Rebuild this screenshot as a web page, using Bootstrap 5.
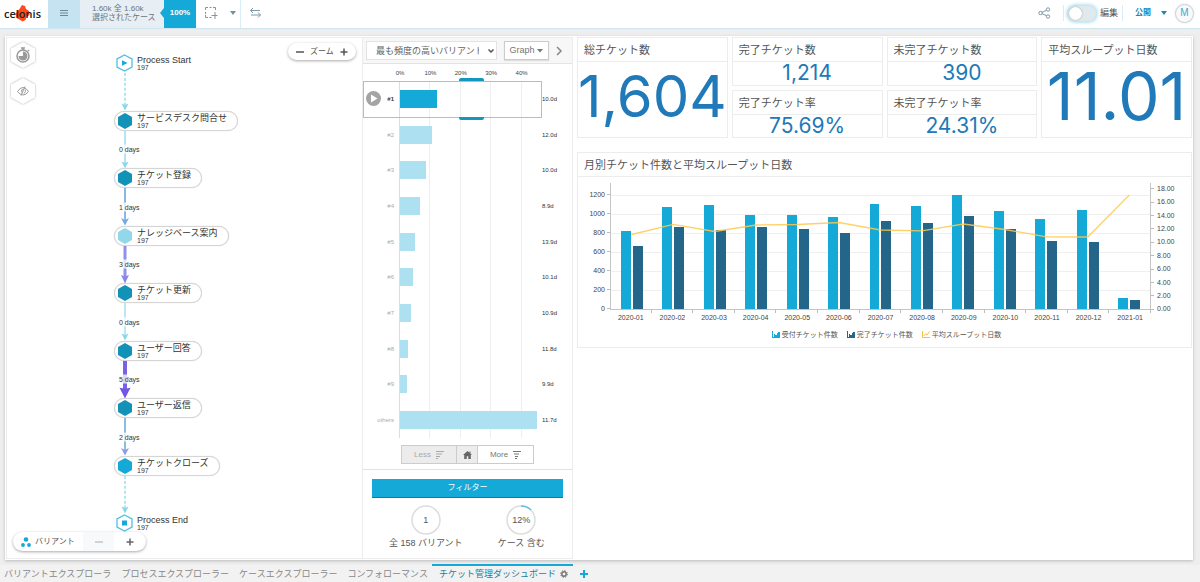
<!DOCTYPE html>
<html lang="ja">
<head>
<meta charset="utf-8">
<meta name="viewport" content="width=device-width, initial-scale=1">
<title>チケット管理ダッシュボード</title>
<link href="https://cdn.jsdelivr.net/npm/bootstrap@5.3.0/dist/css/bootstrap.min.css" rel="stylesheet">
<style>
:root { --cy: #14a9d6; --pale: #ade0f1; --navy: #24668a; --num: #2079b8; --line: #ececec; }
body { font-family: "Liberation Sans", "Noto Sans CJK JP", sans-serif; font-size: 9px; line-height: 12px; color: #555; background: #eee; }
a { color: inherit; text-decoration: none; }
button, select { font-family: inherit; color: inherit; }
svg { display: block; flex: none; }
.topbar { height: 29px; background: #fff; border-bottom: 1px solid #cfe6f0; }
.logo { width: 48px; }
.menu-btn { width: 32px; background: #c5e4f1; border: 0; padding: 0 0 2px; }
.picked { width: 84px; padding: 0 0 2px 12px; background: #e7eff4; color: #6a7680; font-size: 8px; line-height: 9px; }
.pct { width: 32px; background: var(--cy); color: #fff; font-size: 8px; font-weight: 700; position: relative; padding-bottom: 2px; }
.pct::before { content: ""; position: absolute; left: -4px; top: 8px; border: 5px solid transparent; border-left: 0; border-right: 4px solid var(--cy); }
.plain { border: 0; background: none; padding: 0; }
.tool { padding: 0 0 2px; }
.vline { width: 1px; background: #d8edf5; }
.vline-s { height: 16px; }
.right-tools { padding: 0 6px 2px 0; }
.edit-switch { appearance: none; width: 28px; height: 15px; border-radius: 8px; background: #e2e9ed; margin: 0; box-shadow: 0 0 3px 2px #b9e3f3; position: relative; }
.edit-switch::before { content: ""; position: absolute; left: 1px; top: 1px; width: 13px; height: 13px; border-radius: 50%; background: #fff; box-shadow: 0 0 2px #999; }
.publish { font-size: 8px; font-weight: 700; color: #1a86bd; gap: 10px; }
.avatar { width: 19px; height: 19px; border-radius: 50%; border: 1px solid #ccd5da; background: #f7f9fa; color: #41a9d3; font-size: 10px; padding: 0; box-shadow: 0 0 2px #ddd; }
.board { margin: 7px 7px 5px 5px; padding: 1px; background: #fff; box-shadow: 0 1px 3px #bbb; display: grid; grid-template-columns: minmax(0, 357fr) 210px minmax(0, 619fr); }
.pane-process { position: relative; border: 1px solid var(--line); padding: 15px 0 25px 107px; }
.pane-variant { border: 1px solid var(--line); border-left: 0; }
.pane-dash { padding: 0 0 0 4px; }
.hexbtn { filter: drop-shadow(0 0 1px #aaa); }
.over-left { position: absolute; left: 3px; top: 3px; }
.over-zoom { position: absolute; right: 6px; top: 5px; height: 17px; width: 68px; }
.over-bottom { position: absolute; left: 6px; bottom: 7px; height: 19px; width: 133px; }
.pillbar { border-radius: 10px; background: #fff; box-shadow: 0 1px 3px #aaa; font-size: 8px; }
.step { height: 20px; padding: 0 10px 0 3px; gap: 5px; border: 1px solid transparent; border-radius: 10px; width: max-content; color: #333; }
.step.boxed { border-color: #d5d5d5; background: #fff; box-shadow: 0 0 1px #ccc; }
.step.terminal { padding-left: 1px; gap: 4px; }
.step-name { line-height: 10px; }
.step-n { font-size: 7px; line-height: 6px; }
.edge { flex: 1 1 0; min-height: 30px; padding-left: 5px; position: relative; }
.edge svg { width: 12px; height: 100%; }
.edge-days { position: absolute; left: 5px; top: 50%; transform: translateY(-50%); font-size: 7px; line-height: 9px; color: #333; z-index: 1; isolation: isolate; }
.edge-days::before { content: ""; position: absolute; left: 3px; top: 0; width: 6px; height: 9px; background: rgba(255,255,255,.75); z-index: -1; }
.v-head { height: 26px; background: #f7f7f7; border-bottom: 1px solid #e4e4e4; padding: 0 9px 0 3px; }
.v-select { width: 131px; height: 19px; border: 1px solid #e3e3e3; border-radius: 0; background: #fff; font-size: 9px; color: #666; appearance: none; padding: 0 17px 0 9px; }
.v-graph { width: 45px; height: 19px; border: 1px solid #ccc; border-radius: 0; background: #fff; font-size: 9px; line-height: 17px; padding: 0; gap: 2px; color: #777; box-shadow: 0 1px 1px #ddd; }
.v-axis { height: 17px; margin: 0 30px 0 37px; font-size: 6px; line-height: 19px; color: #444; }
.v-ticks { width: 107%; margin-left: -10.7%; }
.v-ticks span { flex: 1; text-align: center; }
.v-rows { position: relative; }
.v-grid { position: absolute; inset: 0 30px 0 36px; border-left: 1px solid #ddd; background: repeating-linear-gradient(to right, transparent 0 calc(21.4% - 1px), #eee calc(21.4% - 1px) 21.4%); }
.v-row { flex: 1; position: relative; display: grid; grid-template-columns: 37px 1fr 30px; align-items: center; font-size: 6px; color: #aaa; }
.v-lab { text-align: right; padding-right: 6px; }
.v-bar { height: 18px; background: var(--pale); }
.v-day { color: #333; }
.v-row.on .v-bar { background: var(--cy); }
.v-row.on .v-lab { color: #333; font-weight: 700; }
.v-row.on::before { content: ""; position: absolute; inset: 0 30px -1px 0; border: 1px solid #7fd0ec; }
.grip { position: absolute; left: 96px; width: 25px; height: 3px; background: #1397bf; }
.grip-t { top: -3px; border-radius: 2px 2px 0 0; }
.grip-b { bottom: -3px; border-radius: 0 0 2px 2px; }
.v-play { position: absolute; left: 3px; top: 10px; }
.v-btn { height: 19px; border: 1px solid #ccc; border-radius: 0; font-size: 8px; line-height: 17px; padding: 0; gap: 5px; background: #fff; color: #777; }
.v-btn.off { background: #ececec; color: #aaa; }
.v-more { display: grid; grid-template-columns: 56px 21px 56px; padding: 7px 38px 5px; border-bottom: 1px solid #e2e2e2; }
.v-filter { padding: 9px 9px 7px; }
.filter-btn { height: 19px; border: 0; border-bottom: 1px solid #0e7ea0; border-radius: 0; background: var(--cy); color: #fff; font-size: 8px; padding: 0; }
.v-stats { padding: 0 3px 9px 15px; }
.v-stat { flex: 1 1 0; gap: 2px; white-space: nowrap; }
.ring { width: 30px; height: 30px; position: relative; color: #555; }
.ring svg { position: absolute; inset: 0; }
.tile { border: 1px solid var(--line); background: #fff; min-width: 0; }
.tile-h { height: 24px; border-bottom: 1px solid var(--line); padding: 0 6px; font-size: 11px; line-height: 22px; font-weight: 400; margin: 0; white-space: nowrap; overflow: hidden; flex: none; font-family: "Noto Sans CJK JP", sans-serif; }
.kpis { display: grid; grid-template-columns: repeat(4, minmax(0, 1fr)); gap: 4px; height: 101px; margin-bottom: 14px; }
.kpi { font-family: Inter, sans-serif; color: var(--num); white-space: nowrap; flex: 1; display: flex; align-items: center; justify-content: center; }
.kpi-s { font-size: 21px; line-height: 22px; }
.kpi-l { font-size: 58px; line-height: 58px; padding-bottom: 8px; }
.kpi-xl { font-size: 66px; line-height: 66px; padding-bottom: 8px; }
.chart { display: grid; grid-template-columns: 32px 1fr 40px; font-size: 7px; line-height: 8px; color: #444; padding-top: 6px; }
.ax-l { height: 126px; padding-top: 2px; }
.ax-l div { height: 19px; line-height: 19px; display: flex; justify-content: flex-end; align-items: center; gap: 2px; }
.ax-l div::after, .ax-r div::before { content: ""; width: 3px; height: 1px; background: #bbb; }
.ax-r { height: 134px; margin: -1px 0 -7px; }
.ax-r div { flex: 1; display: flex; align-items: center; gap: 3px; }
.plot { height: 127px; position: relative; display: grid; grid-template-columns: repeat(13, 1fr); border: solid #c4c4c4; border-width: 0 1px 1px; background: repeating-linear-gradient(to top, transparent 0 18px, #efefef 18px 19px); }
.month { display: flex; align-items: flex-end; justify-content: center; gap: 2px; height: 126px; }
.month i { width: 24%; background: var(--cy); }
.month i + i { background: var(--navy); }
.trend { position: absolute; inset: 0; width: 100%; height: 126px; }
.xlab { grid-column: 2; height: 19px; display: grid; grid-template-columns: repeat(13, 1fr); text-align: center; }
.xlab span { padding-top: 4px; background: linear-gradient(#bbb, #bbb) right top / 1px 3px no-repeat; }
.legend-row { font-size: 7px; line-height: 10px; gap: 9px; height: 18px; padding-left: 4px; font-family: "Noto Sans CJK JP", sans-serif; }
.legend-row span { display: flex; align-items: center; gap: 2px; height: 10px; }
.tabs { height: 17px; padding-left: 4px; gap: 10px; background: #f2f2f2; color: #888; font-family: "Noto Sans CJK JP", sans-serif; white-space: nowrap; }
.tabs a { line-height: 17px; }
.tabs .cur { color: #1b7f9f; border-top: 2px solid var(--cy); margin: -1px 0 0 -6px; padding: 0 5px 0 7px; line-height: 16px; }
.add-tab { margin-left: -3px; }
</style>
</head>
<body>
<div class="d-flex flex-column min-vh-100">
<header class="topbar d-flex align-items-stretch">
  <a href="#" class="logo" aria-label="celonis"><svg width="48" height="28" viewBox="0 0 48 28"><path d="M22 5l3 1 1 3 3 2 .5 4-3 2-1 3-3 1.500-3-2-3-1.500-1-4 2-3 2-2z" fill="#ff4a1a"/><text x="4" y="18" font-family="Open Sans, sans-serif" font-size="11" font-weight="600" fill="#222">celonis</text></svg></a>
  <button class="menu-btn d-flex align-items-center justify-content-center" aria-label="メニュー"><svg width="8" height="8" viewBox="0 0 8 8" stroke="#728793"><path d="M0 1.500h8M0 4h8M0 6.500h8"/></svg></button>
  <div class="picked d-flex flex-column justify-content-center text-nowrap"><span>1.60k 全 1.60k</span><span>選択されたケース</span></div>
  <div class="pct d-flex align-items-center justify-content-center">100%</div>
  <button class="plain tool ms-2" aria-label="選択"><svg width="14" height="14" viewBox="0 0 14 14" fill="none" stroke="#7d97a5"><path d="M1.500 4V1.500H4M5.500 1.500h2M9 1.500h2.500V4M1.500 6v2M1.500 9v2.500H4M5.500 11.500h2M11 6v7M7.500 9.500h6"/></svg></button>
  <button class="plain tool ms-2 ps-1" aria-label="選択の種類"><svg width="6" height="4" viewBox="0 0 6 4"><path d="M0 0h6L3 4z" fill="#7590a0"/></svg></button>
  <div class="vline ms-1"></div>
  <button class="plain tool ms-2" aria-label="切替"><svg width="13" height="10" viewBox="0 0 13 10" fill="none" stroke="#7d97a5"><path d="M4 0L1.500 2.500 4 5M1.500 2.500H11M9 4.500l2.500 2.500L9 9.500M11.500 7H2"/></svg></button>
  <div class="right-tools ms-auto d-flex align-items-center">
    <button class="plain me-2" aria-label="共有"><svg width="13" height="12" viewBox="0 0 13 12" fill="none" stroke="#7d97a5"><circle cx="2.500" cy="6" r="1.700"/><circle cx="10" cy="2.500" r="1.700"/><circle cx="10" cy="9.500" r="1.700"/><path d="M4 5.300l4.500-2M4 6.700l4.500 2"/></svg></button>
    <div class="vline vline-s ms-1 me-1"></div>
    <label class="d-flex align-items-center gap-1"><input type="checkbox" class="edit-switch" role="switch">編集</label>
    <div class="vline vline-s ms-1 me-2"></div>
    <button class="plain publish d-flex align-items-center ms-1">公開<svg width="6" height="4" viewBox="0 0 6 4"><path d="M0 0h6L3 4z" fill="#1a86bd"/></svg></button>
    <button class="avatar ms-2">M</button>
  </div>
</header>

<main class="board flex-grow-1">
  <section class="pane-process d-flex flex-column">
    <div class="over-left d-flex flex-column gap-1">
      <button class="plain hexbtn mb-1" aria-label="スループット"><svg width="26" height="28" viewBox="0 0 26 28"><path d="M13 1l12 6.500v13L13 27 1 20.500v-13z" fill="#fff"/><g fill="none" stroke="#999" stroke-width="1.500"><circle cx="13" cy="15" r="6"/><path d="M11 7h4M13 7v2M18 9l1 1"/></g><path d="M13 15v-4.500a4.500 4.500 0 1 1-4.500 4.500z" fill="#999"/></svg></button>
      <button class="plain hexbtn" aria-label="表示切替"><svg width="26" height="28" viewBox="0 0 26 28"><path d="M13 1l12 6.500v13L13 27 1 20.500v-13z" fill="#fff"/><path d="M7.500 14.500q2.500-4 5.500-4t5.500 4q-2.500 3.500-5.500 3.500t-5.500-3.500zM15 9.500l-4 9M12.500 12q-2 2 0 4M15 12.500q1.500 2-1 4" fill="none" stroke="#999"/></svg></button>
    </div>
    <div class="over-zoom pillbar d-flex align-items-center justify-content-between px-1">
      <button class="plain ps-1" aria-label="縮小"><svg width="8" height="8" stroke="#555" stroke-width="1.500"><path d="M0 4h8"/></svg></button><span>ズーム</span><button class="plain pe-1" aria-label="拡大"><svg width="8" height="8" stroke="#555" stroke-width="1.500"><path d="M.5 4h7M4 .5v7"/></svg></button>
    </div>

    <svg width="0" height="0" class="position-absolute"><defs>
      <path id="hexa" d="M7 0l7 4v8l-7 4-7-4V4z"/>
    </defs></svg>

    <div class="step terminal d-flex align-items-center"><svg width="17" height="18" viewBox="0 0 17 18"><path d="M8.500 1L16 5v8l-7.500 4L1 13V5z" fill="#fff" stroke="#4fbfe0" stroke-width="1.300"/><path d="M6 6.200L11.500 9 6 11.800z" fill="#14a9d6"/></svg><div><div class="step-name">Process Start</div><div class="step-n">197</div></div></div>
    <div class="edge"><svg viewBox="0 0 12 38" preserveAspectRatio="none"><path d="M6 0v33" stroke="#9bdcf0" stroke-width="1.500" stroke-dasharray="3 2"/><path d="M2.500 31L6 38l3.500-7L6 32.500z" fill="#8ad6ed"/></svg></div>
    <div class="step boxed d-flex align-items-center"><svg width="14" height="16"><use href="#hexa" fill="#1392b8"/></svg><div><div class="step-name">サービスデスク問合せ</div><div class="step-n">197</div></div></div>
    <div class="edge"><svg viewBox="0 0 12 38" preserveAspectRatio="none"><path d="M6 0v33" stroke="#9bdcf0" stroke-width="1.500"/><path d="M2.500 31L6 38l3.500-7L6 32.500z" fill="#8ad6ed"/></svg><span class="edge-days">0 days</span></div>
    <div class="step boxed d-flex align-items-center"><svg width="14" height="16"><use href="#hexa" fill="#1392b8"/></svg><div><div class="step-name">チケット登録</div><div class="step-n">197</div></div></div>
    <div class="edge"><svg viewBox="0 0 12 38" preserveAspectRatio="none"><path d="M6 0v33" stroke="#88b8e8" stroke-width="2"/><path d="M2 30.500L6 38l4-7.500L6 32.500z" fill="#78a8e4"/></svg><span class="edge-days">1 days</span></div>
    <div class="step boxed d-flex align-items-center"><svg width="14" height="16"><use href="#hexa" fill="#93d7ea"/></svg><div><div class="step-name">ナレッジベース案内</div><div class="step-n">197</div></div></div>
    <div class="edge"><svg viewBox="0 0 12 38" preserveAspectRatio="none"><path d="M6 0v33" stroke="#8f90e6" stroke-width="3"/><path d="M2 29.500L6 38l4-8.500L6 31z" fill="#8888e6"/></svg><span class="edge-days">3 days</span></div>
    <div class="step boxed d-flex align-items-center"><svg width="14" height="16"><use href="#hexa" fill="#1392b8"/></svg><div><div class="step-name">チケット更新</div><div class="step-n">197</div></div></div>
    <div class="edge"><svg viewBox="0 0 12 38" preserveAspectRatio="none"><path d="M6 0v33" stroke="#a6e0f2" stroke-width="1.500"/><path d="M2.500 31L6 38l3.500-7L6 32.500z" fill="#8ad6ed"/></svg><span class="edge-days">0 days</span></div>
    <div class="step boxed d-flex align-items-center"><svg width="14" height="16"><use href="#hexa" fill="#1392b8"/></svg><div><div class="step-name">ユーザー回答</div><div class="step-n">197</div></div></div>
    <div class="edge"><svg viewBox="0 0 12 38" preserveAspectRatio="none"><path d="M6 0v30" stroke="#7a62e4" stroke-width="4"/><path d="M.5 27L6 38l5.500-11L6 28z" fill="#7355e4"/></svg><span class="edge-days">5 days</span></div>
    <div class="step boxed d-flex align-items-center"><svg width="14" height="16"><use href="#hexa" fill="#1392b8"/></svg><div><div class="step-name">ユーザー返信</div><div class="step-n">197</div></div></div>
    <div class="edge"><svg viewBox="0 0 12 38" preserveAspectRatio="none"><path d="M6 0v33" stroke="#88bde6" stroke-width="2"/><path d="M2 30.500L6 38l4-7.500L6 32.500z" fill="#8a9ce4"/></svg><span class="edge-days">2 days</span></div>
    <div class="step boxed d-flex align-items-center"><svg width="14" height="16"><use href="#hexa" fill="#14a9d6"/></svg><div><div class="step-name">チケットクローズ</div><div class="step-n">197</div></div></div>
    <div class="edge"><svg viewBox="0 0 12 38" preserveAspectRatio="none"><path d="M6 0v33" stroke="#9bdcf0" stroke-width="1.500" stroke-dasharray="3 2"/><path d="M2.500 31L6 38l3.500-7L6 32.500z" fill="#8ad6ed"/></svg></div>
    <div class="step terminal d-flex align-items-center"><svg width="17" height="18" viewBox="0 0 17 18"><path d="M8.500 1L16 5v8l-7.500 4L1 13V5z" fill="#fff" stroke="#4fbfe0" stroke-width="1.300"/><path d="M6 6.500h5v5H6z" fill="#14a9d6"/></svg><div><div class="step-name">Process End</div><div class="step-n">197</div></div></div>

    <div class="over-bottom pillbar d-flex align-items-stretch">
      <div class="d-flex align-items-center gap-1 ps-2 pe-2"><svg width="10" height="10" fill="#14a9d6"><circle cx="5" cy="2.500" r="2.300"/><circle cx="2" cy="8" r="1.900"/><circle cx="8" cy="8" r="1.900"/></svg>バリアント</div>
      <button class="plain bg-light flex-fill d-flex align-items-center justify-content-center" aria-label="減らす"><svg width="8" height="8" stroke="#c4c4c4" stroke-width="1.500"><path d="M0 4h8"/></svg></button>
      <button class="plain flex-fill d-flex align-items-center justify-content-center" aria-label="増やす"><svg width="8" height="8" stroke="#666" stroke-width="1.500"><path d="M.5 4h7M4 .5v7"/></svg></button>
    </div>
  </section>

  <section class="pane-variant d-flex flex-column">
    <div class="v-head d-flex align-items-center justify-content-between">
      <div class="position-relative"><select class="v-select" aria-label="並び順"><option>最も頻度の高いバリアント</option></select><svg class="position-absolute top-50 end-0 translate-middle" width="6" height="4" fill="none" stroke="#555" stroke-width="1.500"><path d="M.5.5L3 3 5.500.5"/></svg></div>
      <button class="v-graph d-flex align-items-center justify-content-center">Graph <svg width="6" height="4" viewBox="0 0 6 4"><path d="M0 0h6L3 3.500z" fill="#777"/></svg></button>
      <button class="plain" aria-label="次へ"><svg width="8" height="10" fill="none" stroke="#888" stroke-width="1.500"><path d="M2 1l4 4-4 4"/></svg></button>
    </div>
    <div class="v-axis"><div class="v-ticks d-flex"><span>0%</span><span>10%</span><span>20%</span><span>30%</span><span>40%</span></div></div>
    <div class="v-rows d-flex flex-column flex-grow-1">
      <div class="v-grid"></div>
      <div class="v-row on"><i class="grip grip-t"></i><i class="grip grip-b"></i><svg class="v-play" width="15" height="15" viewBox="0 0 15 15"><circle cx="7.500" cy="7.500" r="7.500" fill="#a4a4a4"/><path d="M5 3.500l6.500 4-6.500 4z" fill="#fff"/></svg><span class="v-lab">#1</span><div class="v-bar" style="width:26.400%"></div><span class="v-day">10.0d</span></div>
      <div class="v-row"><span class="v-lab">#2</span><div class="v-bar" style="width:22.500%"></div><span class="v-day">12.0d</span></div>
      <div class="v-row"><span class="v-lab">#3</span><div class="v-bar" style="width:18.200%"></div><span class="v-day">10.0d</span></div>
      <div class="v-row"><span class="v-lab">#4</span><div class="v-bar" style="width:14%"></div><span class="v-day">8.9d</span></div>
      <div class="v-row"><span class="v-lab">#5</span><div class="v-bar" style="width:10.500%"></div><span class="v-day">13.9d</span></div>
      <div class="v-row"><span class="v-lab">#6</span><div class="v-bar" style="width:9.500%"></div><span class="v-day">10.1d</span></div>
      <div class="v-row"><span class="v-lab">#7</span><div class="v-bar" style="width:7.700%"></div><span class="v-day">10.9d</span></div>
      <div class="v-row"><span class="v-lab">#8</span><div class="v-bar" style="width:5.800%"></div><span class="v-day">11.8d</span></div>
      <div class="v-row"><span class="v-lab">#9</span><div class="v-bar" style="width:5%"></div><span class="v-day">9.9d</span></div>
      <div class="v-row"><span class="v-lab">others</span><div class="v-bar" style="width:96.500%"></div><span class="v-day">11.7d</span></div>
    </div>
    <div class="v-more">
      <button class="v-btn off d-flex align-items-center justify-content-center" disabled>Less <svg width="8" height="8" stroke="#aaa"><path d="M0 .5h8M0 3h6M0 5.500h4M0 7.500h2"/></svg></button>
      <button class="v-btn off d-flex align-items-center justify-content-center border-start-0" aria-label="ホーム"><svg width="9" height="8" viewBox="0 0 9 8"><path d="M4.500 0L9 4H7.800v4H5.300V5.200H3.700V8H1.200V4H0zM6.500.5h1v2h-1z" fill="#666"/></svg></button>
      <button class="v-btn d-flex align-items-center justify-content-center border-start-0">More <svg width="8" height="8" stroke="#777"><path d="M0 .5h8M1 3h5M2 5.500h3M2 7.500h2"/></svg></button>
    </div>
    <div class="v-filter d-grid"><button class="filter-btn">フィルター</button></div>
    <div class="v-stats d-flex text-center">
      <div class="v-stat d-flex flex-column align-items-center"><div class="ring d-flex align-items-center justify-content-center"><svg width="30" height="30" fill="none" stroke="#ddd" stroke-width="1.500"><circle cx="15" cy="15" r="14"/></svg>1</div><span>全 158 バリアント</span></div>
      <div class="v-stat d-flex flex-column align-items-center"><div class="ring d-flex align-items-center justify-content-center"><svg width="30" height="30" fill="none" stroke="#ddd" stroke-width="1.500"><circle cx="15" cy="15" r="14"/><path d="M15 1a14 14 0 0 1 10 4" stroke="#62c3e2"/></svg>12%</div><span>ケース 含む</span></div>
    </div>
  </section>

  <section class="pane-dash">
    <div class="kpis">
      <article class="tile d-flex flex-column"><h2 class="tile-h">総チケット数</h2><div class="kpi kpi-l">1,604</div></article>
      <div class="d-flex flex-column gap-1">
        <article class="tile d-flex flex-column flex-fill"><h2 class="tile-h">完了チケット数</h2><div class="kpi kpi-s">1,214</div></article>
        <article class="tile d-flex flex-column flex-fill"><h2 class="tile-h">完了チケット率</h2><div class="kpi kpi-s">75.69%</div></article>
      </div>
      <div class="d-flex flex-column gap-1">
        <article class="tile d-flex flex-column flex-fill"><h2 class="tile-h">未完了チケット数</h2><div class="kpi kpi-s">390</div></article>
        <article class="tile d-flex flex-column flex-fill"><h2 class="tile-h">未完了チケット率</h2><div class="kpi kpi-s">24.31%</div></article>
      </div>
      <article class="tile d-flex flex-column"><h2 class="tile-h">平均スループット日数</h2><div class="kpi kpi-xl">11.01</div></article>
    </div>
    <article class="tile">
      <h2 class="tile-h">月別チケット件数と平均スループット日数</h2>
      <div class="chart">
        <div class="ax-l"><div>1200</div><div>1000</div><div>800</div><div>600</div><div>400</div><div>200</div><div>0</div></div>
        <div class="plot">
          <div class="month"><i style="height:62.200%"></i><i style="height:49.800%"></i></div>
          <div class="month"><i style="height:80.700%"></i><i style="height:65.200%"></i></div>
          <div class="month"><i style="height:82.600%"></i><i style="height:62.400%"></i></div>
          <div class="month"><i style="height:75%"></i><i style="height:64.900%"></i></div>
          <div class="month"><i style="height:75%"></i><i style="height:63.700%"></i></div>
          <div class="month"><i style="height:72.800%"></i><i style="height:60.300%"></i></div>
          <div class="month"><i style="height:83.300%"></i><i style="height:69.500%"></i></div>
          <div class="month"><i style="height:81.800%"></i><i style="height:68.300%"></i></div>
          <div class="month"><i style="height:90.500%"></i><i style="height:74.100%"></i></div>
          <div class="month"><i style="height:77.700%"></i><i style="height:63.600%"></i></div>
          <div class="month"><i style="height:71.300%"></i><i style="height:53.800%"></i></div>
          <div class="month"><i style="height:78.400%"></i><i style="height:53%"></i></div>
          <div class="month"><i style="height:9.100%"></i><i style="height:7.200%"></i></div>
          <svg class="trend" viewBox="0 0 1300 126" preserveAspectRatio="none"><polyline points="50,51.500 150,41.300 250,48.500 350,42 450,41.500 550,39.500 650,47 750,47.800 850,41 950,46.500 1050,53.800 1150,54 1250,12" fill="none" stroke="#ffc94f" stroke-width="1.300" stroke-opacity=".85" vector-effect="non-scaling-stroke"/></svg>
        </div>
        <div class="ax-r d-flex flex-column"><div>18.00</div><div>16.00</div><div>14.00</div><div>12.00</div><div>10.00</div><div>8.00</div><div>6.00</div><div>4.00</div><div>2.00</div><div>0.00</div></div>
        <div class="xlab"><span>2020-01</span><span>2020-02</span><span>2020-03</span><span>2020-04</span><span>2020-05</span><span>2020-06</span><span>2020-07</span><span>2020-08</span><span>2020-09</span><span>2020-10</span><span>2020-11</span><span>2020-12</span><span>2021-01</span></div>
      </div>
      <div class="legend-row d-flex justify-content-center">
        <span><svg width="8" height="7" fill="#14a9d6"><path d="M0 0h1v6h7v1H0zM2 3h1v3H2zM3 4h2v2H3zM5 2h1v4H5zM6 1h2v5H6z"/></svg>受付チケット件数</span>
        <span><svg width="8" height="7" fill="#24668a"><path d="M0 0h1v6h7v1H0zM2 3h1v3H2zM3 4h2v2H3zM5 2h1v4H5zM6 1h2v5H6z"/></svg>完了チケット件数</span>
        <span><svg width="8" height="7" fill="none" stroke="#f8bd45"><path d="M.5 0v6.500H8M1.500 5l2-2 1.500 1L7.500.5"/></svg>平均スループット日数</span>
      </div>
    </article>
  </section>
</main>

<nav class="tabs d-flex align-items-start">
  <a href="#">バリアントエクスプローラ</a><a href="#">プロセスエクスプローラー</a><a href="#">ケースエクスプローラー</a><a href="#">コンフォローマンス</a>
  <a href="#" class="cur d-flex align-items-center gap-1" aria-current="page">チケット管理ダッシュボード<svg width="8" height="8" viewBox="0 0 8 8" fill="none" stroke="#777"><circle cx="4" cy="4" r="2.200" stroke-width="1.500"/><circle cx="4" cy="4" r="3.400" stroke-dasharray="1.300 1.370"/></svg></a>
  <button class="plain add-tab align-self-center" aria-label="シートを追加"><svg width="8" height="8" stroke="#14a9d6" stroke-width="2"><path d="M0 4h8M4 0v8"/></svg></button>
</nav>
</div>
<script src="https://cdn.jsdelivr.net/npm/bootstrap@5.3.0/dist/js/bootstrap.bundle.min.js"></script>
</body>
</html>
